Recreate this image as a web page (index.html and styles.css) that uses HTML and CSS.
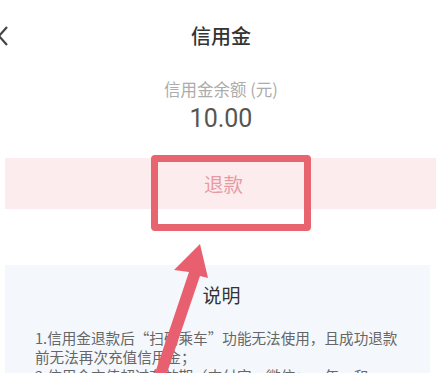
FILE: index.html
```html
<!DOCTYPE html>
<html lang="zh">
<head>
<meta charset="utf-8">
<title>信用金</title>
<link rel="stylesheet" href="styles.css">
</head>
<body>
<div class="page">
  <header class="topbar">
    <svg class="back" width="12" height="22" viewBox="0 0 12 22"><polyline points="8,2 0,11 8,20" fill="none" stroke="#444" stroke-width="2.2"/></svg>
    <h1 class="title">信用金</h1>
  </header>
  <section class="balance">
    <div class="balance-label">信用金余额 (元)</div>
    <div class="balance-amount">10.00</div>
  </section>
  <div class="refund">退款</div>
  <section class="notice">
    <h2 class="notice-title">说明</h2>
    <p class="notice-text">1.信用金退款后“扫码乘车”功能无法使用，且成功退款<br>前无法再次充值信用金；<br>2.信用金充值超过有效期（支付宝、微信：一年，和</p>
  </section>
  <div class="highlight"></div>
  <svg class="arrow" width="436" height="373" viewBox="0 0 436 373">
    <polygon points="200,244 208,278 200,276 167,373 155,373 189,272 174,270" fill="#e8606f"/>
  </svg>
</div>
</body>
</html>
```
FILE: styles.css
```css
html, body {
  margin: 0;
  padding: 0;
  background: #ffffff;
}
body {
  font-family: "Noto Sans CJK SC", "Noto Sans", sans-serif;
  overflow: hidden;
}
.page {
  position: relative;
  width: 436px;
  height: 373px;
  overflow: hidden;
}
.topbar {
  height: 72px;
  display: flex;
  align-items: center;
  justify-content: center;
  position: relative;
}
.back {
  position: absolute;
  left: -1px;
  top: 25px;
}
.title {
  margin: 0;
  font-size: 20px;
  font-weight: 500;
  color: #333;
  line-height: 26px;
  padding-left: 6px;
}
.balance {
  padding-top: 6px;
  display: flex;
  flex-direction: column;
  align-items: center;
  padding-left: 6px;
}
.balance-label {
  font-size: 16.5px;
  line-height: 22px;
  color: #acacac;
}
.balance-amount {
  margin-top: 4px;
  font-family: Roboto, "Noto Sans", sans-serif;
  font-size: 25px;
  line-height: 30px;
  color: #555;
}
.refund {
  margin: 24px 0 0 5px;
  height: 51px;
  background: #fdeced;
  color: #e79aa3;
  font-size: 19.5px;
  display: flex;
  align-items: center;
  justify-content: center;
  padding-left: 6px;
}
.notice {
  margin: 56px 6px 0 5px;
  background: #f4f8fc;
  padding: 17px 20px 30px 30px;
  height: 200px;
}
.notice-title {
  margin: 0;
  text-align: center;
  font-size: 19px;
  font-weight: 400;
  line-height: 26px;
  color: #333;
  padding-right: 2px;
}
.notice-text {
  margin: 20px 0 0 0;
  font-size: 14.6px;
  line-height: 19px;
  color: #666;
  white-space: nowrap;
}
.highlight {
  position: absolute;
  left: 151px;
  top: 155px;
  width: 160px;
  height: 76px;
  box-sizing: border-box;
  border: 7px solid #e8646f;
  border-radius: 4px;
}
.arrow {
  position: absolute;
  left: 0;
  top: 0;
  pointer-events: none;
}
```
